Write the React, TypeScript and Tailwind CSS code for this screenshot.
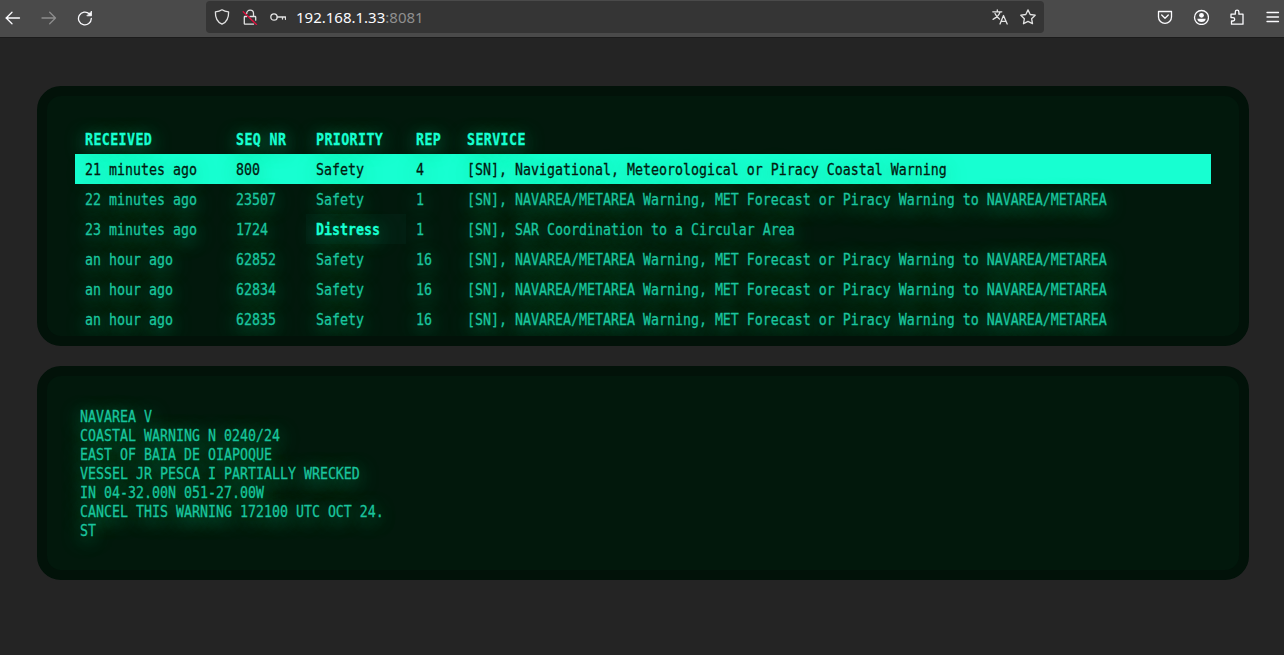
import type { ReactNode } from "react";

const rows = [
  { received: "21 minutes ago", seq: "800", priority: "Safety", rep: "4", service: "[SN], Navigational, Meteorological or Piracy Coastal Warning", selected: true },
  { received: "22 minutes ago", seq: "23507", priority: "Safety", rep: "1", service: "[SN], NAVAREA/METAREA Warning, MET Forecast or Piracy Warning to NAVAREA/METAREA" },
  { received: "23 minutes ago", seq: "1724", priority: "Distress", rep: "1", service: "[SN], SAR Coordination to a Circular Area" },
  { received: "an hour ago", seq: "62852", priority: "Safety", rep: "16", service: "[SN], NAVAREA/METAREA Warning, MET Forecast or Piracy Warning to NAVAREA/METAREA" },
  { received: "an hour ago", seq: "62834", priority: "Safety", rep: "16", service: "[SN], NAVAREA/METAREA Warning, MET Forecast or Piracy Warning to NAVAREA/METAREA" },
  { received: "an hour ago", seq: "62835", priority: "Safety", rep: "16", service: "[SN], NAVAREA/METAREA Warning, MET Forecast or Piracy Warning to NAVAREA/METAREA" },
];

const message = [
  "NAVAREA V",
  "COASTAL WARNING N 0240/24",
  "EAST OF BAIA DE OIAPOQUE",
  "VESSEL JR PESCA I PARTIALLY WRECKED",
  "IN 04-32.00N 051-27.00W",
  "CANCEL THIS WARNING 172100 UTC OCT 24.",
  "ST",
];

const headings = ["RECEIVED", "SEQ NR", "PRIORITY", "REP", "SERVICE"];

function Icon({ children, className = "" }: { children: ReactNode; className?: string }) {
  return (
    <svg viewBox="0 0 16 16" className={`size-4 shrink-0 ${className}`} fill="none" stroke="currentColor" strokeWidth="1.3" strokeLinecap="round" strokeLinejoin="round">
      {children}
    </svg>
  );
}

function Glyphs({ children }: { children: ReactNode }) {
  return <span className="inline-block scale-y-[1.14] whitespace-pre [-webkit-text-stroke:0.25px_currentColor]">{children}</span>;
}

function Toolbar() {
  return (
    <header className="flex h-[38px] shrink-0 items-start border-b border-[#1b1b1b] bg-[#4a4a4a] text-[#fbfbfe]">
      <div className="flex h-[35px] w-[206px] items-center gap-5 pl-[5px]">
        <Icon><path d="M1 8h13.500M7 2.300 1.200 8 7 13.700" /></Icon>
        <Icon className="text-[#8d8d8d]"><path d="M1 8h13.500M8.700 2.300l5.800 5.700-5.800 5.700" /></Icon>
        <Icon><path d="M14.300 8.500A6.400 6.400 0 1 1 12.300 3.800l1.200 1" /><path d="M14.500 1.500v4.300H10.200z" fill="currentColor" strokeWidth=".8" /></Icon>
      </div>
      <div className="mt-px flex h-8 w-[838px] items-center rounded bg-[#353535] pl-2 pr-2">
        <Icon className="text-[#e2e2e2]"><path d="M8 .8C6.300 2 4 2.700 1.400 2.900c-.2 5.200 1.400 9.800 6.600 12.300 5.200-2.500 6.800-7.100 6.600-12.300C12 2.700 9.700 2 8 .8z" /></Icon>
        <Icon className="ml-3 text-[#e2e2e2]"><path d="M4.700 4.500a3.400 3.400 0 0 1 6.800 0V7.500M8 7.500h5a.7.7 0 0 1 .7.7v3M11.500 15.200H3a.7.7 0 0 1-.7-.7V8.200a.7.7 0 0 1 .7-.7h1.700" /><path d="M1.200 2.800l13.300 12.700" stroke="#e2103f" /></Icon>
        <Icon className="ml-3 text-[#e2e2e2]"><circle cx="4" cy="8" r="3.200" /><path d="M7.200 8h8.300v2.300M12.500 8v2" /></Icon>
        <span className="ml-2.5 font-['Noto_Sans',sans-serif] text-[15px] leading-8 text-[#fbfbfe]">192.168.1.33<span className="text-[#8f8f8f]">:8081</span></span>
        <Icon className="ml-auto text-[#e2e2e2]"><path d="M.8 2.800h9M5.300.8v2M8 3C7.300 6 4.500 8.500 1 10.300M3 4.500c1 2.500 2.500 4 4.500 5.500M8 15l3.500-8.500L15.200 15M9.200 12.300H14" /></Icon>
        <Icon className="ml-3 text-[#e2e2e2]"><path d="M8 .9l2.200 4.600 5 .7-3.600 3.500.9 5L8 12.400l-4.500 2.300.9-5L.8 6.200l5-.7z" /></Icon>
      </div>
      <div className="ml-[113px] flex h-[34px] items-center">
        <Icon><path d="M1.500 2.500h13V8a6.500 6.300 0 0 1-13 0zM4.700 6 8 9.200 11.300 6" /></Icon>
        <Icon className="ml-5"><circle cx="8.500" cy="8.500" r="7" /><circle cx="8.500" cy="6.300" r="2.400" fill="currentColor" stroke="none" /><path d="M4.300 9.800h8.400c0 2-1.900 3.300-4.200 3.300s-4.200-1.300-4.200-3.300z" fill="currentColor" stroke="none" /></Icon>
        <Icon className="ml-5"><path d="M2 5.200h4.300V3a1.800 1.800 0 0 1 3.600 0v2.200H14v10H2.500V12H4a1.700 1.700 0 0 0 0-3.400H2z" /></Icon>
        <Icon className="ml-5"><path d="M2 3.500h11.500M2 8h11.500M2 12.500h11.500" /></Icon>
      </div>
    </header>
  );
}

export default function App() {
  const grid = "grid grid-cols-[151px_80px_100px_51px_1fr]";
  return (
    <div className="flex h-[655px] w-[1284px] flex-col overflow-hidden bg-[#242424]">
      <Toolbar />
      <main className="flex flex-col gap-5 pl-[37px] pt-12 font-['DejaVu_Sans_Mono',monospace] text-[13.29px] text-[#1ac59e] [text-shadow:0_4px_18px_#18bd7c]">
        <section className="h-[260px] w-[1212px] overflow-hidden rounded-3xl border-[10px] border-[#021209] bg-[#02180c] px-7 pt-7">
          <div className={`${grid} h-[30px] leading-[32px] font-bold tracking-[0.4px] text-[#17ffd1]`}>
            {headings.map((h) => <div key={h} className="px-2.5"><Glyphs>{h}</Glyphs></div>)}
          </div>
          {rows.map((r) => (
            <div key={r.seq} className={`${grid} h-[30px] leading-[32px] ${r.selected ? "bg-[#17ffd1] text-[#021b10]" : ""}`}>
              <div className="h-[30px] px-2.5"><Glyphs>{r.received}</Glyphs></div>
              <div className="h-[30px] px-2.5"><Glyphs>{r.seq}</Glyphs></div>
              <div className={r.priority === "Distress" ? "h-[30px] bg-[#031e12] px-2.5 font-bold text-[#17ffd1]" : "h-[30px] px-2.5"}><Glyphs>{r.priority}</Glyphs></div>
              <div className="h-[30px] px-2.5"><Glyphs>{r.rep}</Glyphs></div>
              <div className="h-[30px] px-2.5"><Glyphs>{r.service}</Glyphs></div>
            </div>
          ))}
        </section>
        <section className="h-[214px] w-[1212px] overflow-hidden rounded-3xl border-[10px] border-[#021209] bg-[#02180c] pl-[33px] pt-[31px] leading-[19px]">
          {message.map((line) => <div key={line} className="h-[19px]"><Glyphs>{line}</Glyphs></div>)}
        </section>
      </main>
    </div>
  );
}
